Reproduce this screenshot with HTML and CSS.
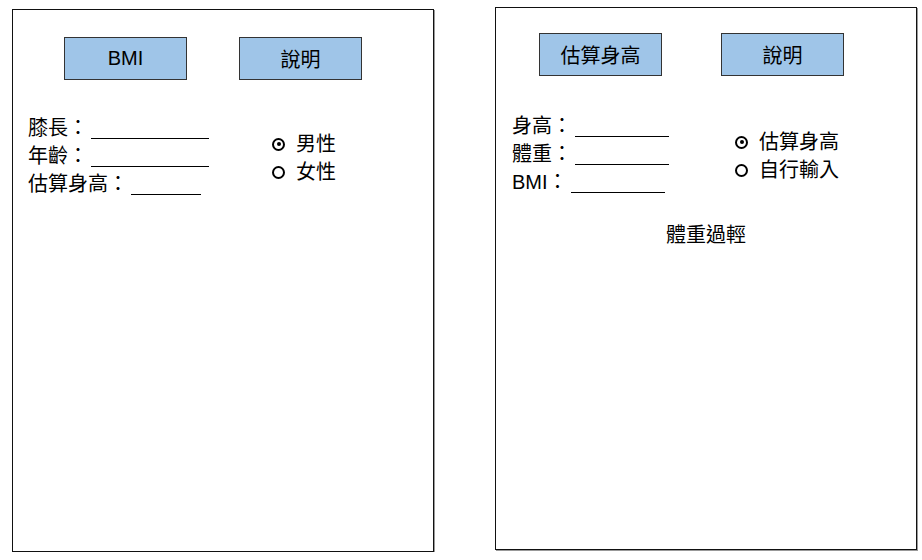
FILE: index.html
```html
<!DOCTYPE html>
<html lang="zh-Hant">
<head>
  <meta charset="UTF-8">
  <meta name="viewport" content="width=device-width, initial-scale=1.0">
  <title>BMI 與估算身高</title>
  <link rel="stylesheet" href="styles.css">
</head>
<body>
  <div class="frame frame-left">
    <div class="toolbar">
      <button class="btn">BMI</button>
      <button class="btn">說明</button>
    </div>
    <div class="form">
      <div class="fields">
        <div>膝長：<span class="blank blank-long"></span></div>
        <div>年齡：<span class="blank blank-long"></span></div>
        <div>估算身高：<span class="blank blank-short"></span></div>
      </div>
      <div class="options">
        <label class="option"><span class="radio checked"></span>男性</label>
        <label class="option"><span class="radio"></span>女性</label>
      </div>
    </div>
  </div>

  <div class="frame frame-right">
    <div class="toolbar">
      <button class="btn">估算身高</button>
      <button class="btn">說明</button>
    </div>
    <div class="form">
      <div class="fields">
        <div>身高：<span class="blank blank-mid"></span></div>
        <div>體重：<span class="blank blank-mid"></span></div>
        <div>BMI：<span class="blank blank-mid"></span></div>
      </div>
      <div class="options">
        <label class="option"><span class="radio checked"></span>估算身高</label>
        <label class="option"><span class="radio"></span>自行輸入</label>
      </div>
    </div>
    <div class="result">體重過輕</div>
  </div>
</body>
</html>
```

FILE: styles.css
```css
body {
  margin: 0;
  padding: 7px 0 0 12px;
  display: flex;
  align-items: flex-start;
  gap: 61px;
  background: white;
  font-family: "Liberation Sans", "Noto Sans CJK TC", sans-serif;
  font-size: 20px;
  color: #000;
}
.frame {
  width: 422px;
  height: 543px;
  box-sizing: border-box;
  border: 1px solid #111;
  box-shadow: 1px 1px 0 #999;
}
.frame-left {
  margin-top: 2px;
}
.toolbar {
  display: flex;
}
.frame-left .toolbar {
  padding: 27px 0 0 51px;
  gap: 52px;
}
.frame-right .toolbar {
  padding: 25px 0 0 43px;
  gap: 59px;
}
.btn {
  width: 123px;
  height: 43px;
  border: 1px solid #333;
  background: #9fc5e8;
  font-family: inherit;
  font-size: 20px;
  color: #000;
  padding: 0;
}
.form {
  display: flex;
  align-items: flex-start;
  line-height: 28px;
}
.frame-left .form {
  margin-top: 34px;
  padding-left: 15px;
}
.frame-right .form {
  margin-top: 36px;
  padding-left: 16px;
}
.frame-left .fields {
  width: 244px;
}
.frame-right .fields {
  width: 223px;
}
.blank {
  display: inline-block;
  height: 1px;
  margin-left: 3px;
  border-bottom: 1.5px solid #000;
  vertical-align: -4px;
}
.blank-long {
  width: 118px;
}
.blank-mid {
  width: 94px;
}
.blank-short {
  width: 70px;
}
.options {
  margin-top: 16px;
}
.option {
  display: flex;
  align-items: center;
  gap: 11px;
}
.radio {
  width: 13px;
  height: 13px;
  box-sizing: border-box;
  border: 2.5px solid #000;
  border-radius: 50%;
  display: flex;
  align-items: center;
  justify-content: center;
}
.radio.checked::after {
  content: "";
  width: 4px;
  height: 4px;
  border-radius: 50%;
  background: #000;
}
.result {
  margin-top: 25px;
  text-align: center;
  line-height: 28px;
}
```
